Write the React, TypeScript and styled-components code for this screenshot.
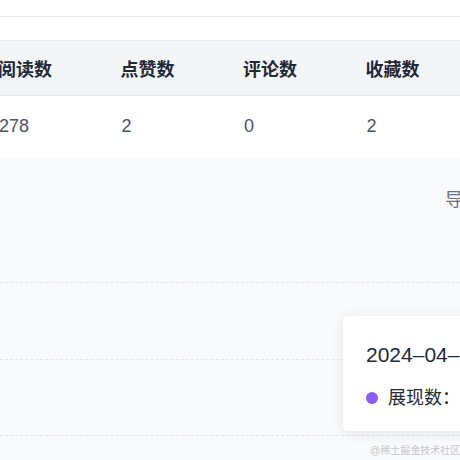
import React from 'react'
import styled, { createGlobalStyle } from 'styled-components';

const GlobalStyle = createGlobalStyle`
  html, body {
    margin: 0;
    padding: 0;
    background: #f9fafb;
    overflow: hidden;
  }
  body {
    font-family: "Liberation Sans", "Noto Sans CJK SC", sans-serif;
  }
`;

const columns = ['阅读数', '点赞数', '评论数', '收藏数', '关注数'];
const values = ['278', '2', '0', '2', '0'];

const App: React.FC = () => {
  return (
    <>
      <GlobalStyle />
      <Page>
        <TopBar />
        <Spacer />
        <Table>
          <HeadRow>
            {columns.map((c) => <HeadCell key={c}>{c}</HeadCell>)}
          </HeadRow>
          <BodyRow>
            {values.map((v, i) => <BodyCell key={i}>{v}</BodyCell>)}
          </BodyRow>
        </Table>
        <ChartSection>
          <Toolbar>
            <ExportButton>导出数据</ExportButton>
          </Toolbar>
          <ChartArea>
            <GridLine />
            <GridLine />
            <GridLine />
            <Tooltip>
              <TooltipDate>2024–04–18</TooltipDate>
              <TooltipRow>
                <Dot color="#8b5cf6" />
                <span>展现数：</span>
                <strong>218</strong>
              </TooltipRow>
            </Tooltip>
          </ChartArea>
        </ChartSection>
        <Watermark>@稀土掘金技术社区</Watermark>
      </Page>
    </>
  )
}

const Page = styled.div`
  position: relative;
  width: 540px;
  height: 460px;
  background: #f9fafb;
`;

const TopBar = styled.div`
  height: 16px;
  background: #fff;
  border-bottom: 1px solid #e5e7eb;
`;

const Spacer = styled.div`
  height: 23px;
  background: #fff;
`;

const Table = styled.div`
  background: #fff;
`;

const HeadRow = styled.div`
  display: grid;
  grid-template-columns: repeat(5, 122.5px);
  margin-left: -2px;
  height: 54px;
  align-items: center;
  background: #f4f5f7;
  border-top: 1px solid #e8eaed;
  border-bottom: 1px solid #e5e7eb;
`;

const HeadCell = styled.div`
  font-size: 18px;
  font-weight: 700;
  color: #1f2937;
`;

const BodyRow = styled.div`
  display: grid;
  grid-template-columns: repeat(5, 122.5px);
  margin-left: -1px;
  height: 61px;
  align-items: center;
`;

const BodyCell = styled.div`
  font-size: 18px;
  color: #4b5563;
`;

const ChartSection = styled.section`
  padding-top: 33px;
`;

const Toolbar = styled.div`
  display: flex;
  justify-content: flex-end;
  padding-right: 23px;
`;

const ExportButton = styled.span`
  font-size: 18px;
  line-height: 20px;
  color: #6b7280;
`;

const ChartArea = styled.div`
  position: relative;
  padding-top: 72px;
  display: flex;
  flex-direction: column;
  gap: 75.5px;
`;

const GridLine = styled.div`
  height: 0;
  border-top: 1.5px dashed #e3e5e8;
`;

const Tooltip = styled.div`
  position: absolute;
  left: 343px;
  top: 106px;
  width: 200px;
  height: 115px;
  box-sizing: border-box;
  padding: 24px 22px 0 23px;
  background: #fff;
  border-radius: 5px;
  box-shadow: 0 2px 14px rgba(0, 0, 0, 0.09);
`;

const TooltipDate = styled.div`
  font-size: 21px;
  line-height: 30px;
  color: #1f2937;
  white-space: nowrap;
`;

const TooltipRow = styled.div`
  display: flex;
  align-items: center;
  margin-top: 16px;
  font-size: 18px;
  line-height: 24px;
  color: #1f2937;
  white-space: nowrap;

  strong {
    font-weight: 700;
  }
`;

const Dot = styled.i<{ color: string }>`
  display: inline-block;
  width: 12px;
  height: 12px;
  border-radius: 50%;
  margin: 0 10px 0 0;
  background: ${({ color }) => color};
`;

const Watermark = styled.div`
  position: absolute;
  left: 370px;
  top: 444px;
  font-size: 10px;
  line-height: 14px;
  color: #c4c7cc;
  white-space: nowrap;
`;

export default App;
